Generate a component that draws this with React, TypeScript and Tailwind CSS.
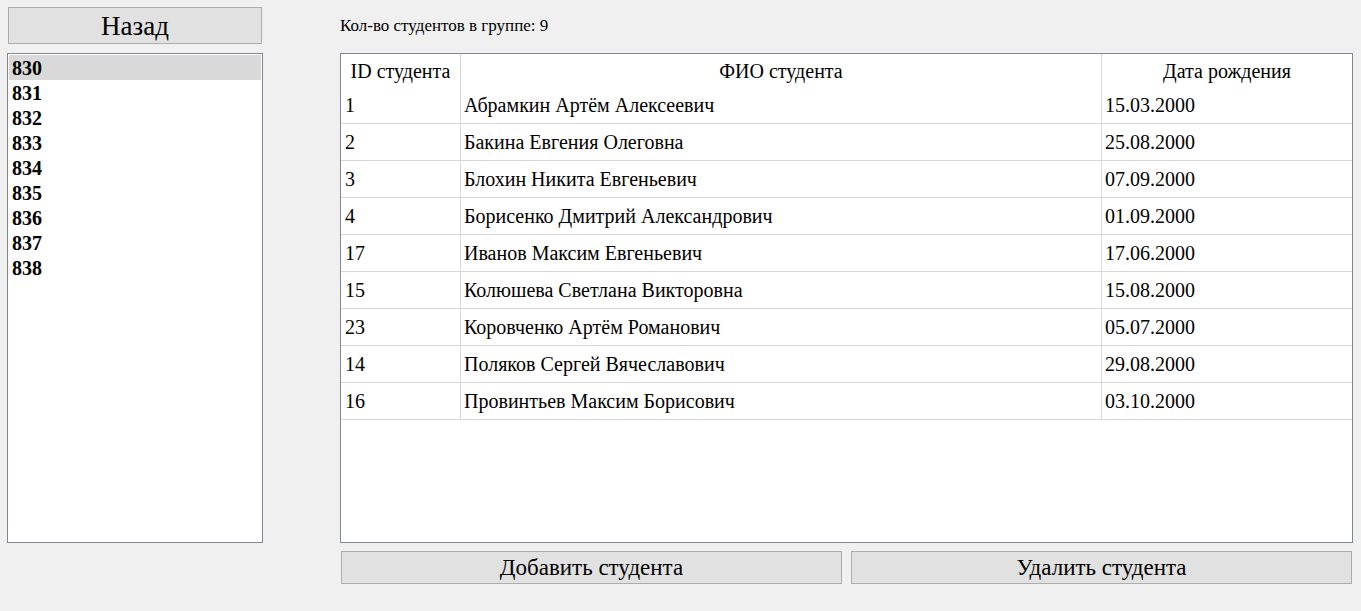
const GROUPS = ['830', '831', '832', '833', '834', '835', '836', '837', '838'];

const STUDENTS = [
  { id: '1', name: 'Абрамкин Артём Алексеевич', birth: '15.03.2000' },
  { id: '2', name: 'Бакина Евгения Олеговна', birth: '25.08.2000' },
  { id: '3', name: 'Блохин Никита Евгеньевич', birth: '07.09.2000' },
  { id: '4', name: 'Борисенко Дмитрий Александрович', birth: '01.09.2000' },
  { id: '17', name: 'Иванов Максим Евгеньевич', birth: '17.06.2000' },
  { id: '15', name: 'Колюшева Светлана Викторовна', birth: '15.08.2000' },
  { id: '23', name: 'Коровченко Артём Романович', birth: '05.07.2000' },
  { id: '14', name: 'Поляков Сергей Вячеславович', birth: '29.08.2000' },
  { id: '16', name: 'Провинтьев Максим Борисович', birth: '03.10.2000' },
];

const serif = "font-['Liberation_Serif','Times_New_Roman',serif]";

export default function App() {
  return (
    <div className={`flex h-[611px] w-[1361px] bg-[#f0f0f0] text-black ${serif}`}>
      {/* Left: back button + group list */}
      <div className="ml-[7px] flex w-[256px] flex-col pt-[7px]">
        <button className="mx-px h-[37px] border border-[#adadad] bg-[#e1e1e1] pt-px text-[27px] leading-none">
          Назад
        </button>
        <div className="mt-[9px] h-[490px] border border-[#828790] bg-white p-px">
          {GROUPS.map((g, i) => (
            <div
              key={g}
              className={`h-[25px] pl-[3px] pt-px text-[20px] font-bold leading-[25px] ${i === 0 ? 'bg-[#d9d9d9]' : ''}`}
            >
              {g}
            </div>
          ))}
        </div>
      </div>

      {/* Right: students table */}
      <div className="ml-[77px] flex w-[1013px] flex-col">
        <div className="flex h-[53px] items-center pb-[1px] text-[17px]">Кол-во студентов в группе: 9</div>

        <div className="h-[490px] border border-[#828790] bg-white">
          <div className="grid grid-cols-[120px_641px_250px] text-[20px]">
            <div className="flex h-[33px] items-center justify-center border-r border-[#d8d8d8]">ID студента</div>
            <div className="flex h-[33px] items-center justify-center border-r border-[#d8d8d8]">ФИО студента</div>
            <div className="flex h-[33px] items-center justify-center">Дата рождения</div>

            {STUDENTS.map((s) => (
              <div key={s.id} className="contents">
                <div className="flex h-[37px] items-center border-b border-r border-[#d8d8d8] pb-px pl-[4px]">{s.id}</div>
                <div className="flex h-[37px] items-center border-b border-r border-[#d8d8d8] pb-px pl-[3px]">{s.name}</div>
                <div className="flex h-[37px] items-center border-b border-[#d8d8d8] pb-px pl-[3px]">{s.birth}</div>
              </div>
            ))}
          </div>
        </div>

        <div className="mt-[8px] flex gap-[9px] px-px">
          <button className="h-[33px] w-[501px] border border-[#adadad] bg-[#e1e1e1] pb-px text-[23px] leading-none">
            Добавить студента
          </button>
          <button className="h-[33px] w-[501px] border border-[#adadad] bg-[#e1e1e1] pb-px text-[23px] leading-none">
            Удалить студента
          </button>
        </div>
      </div>
    </div>
  );
}
